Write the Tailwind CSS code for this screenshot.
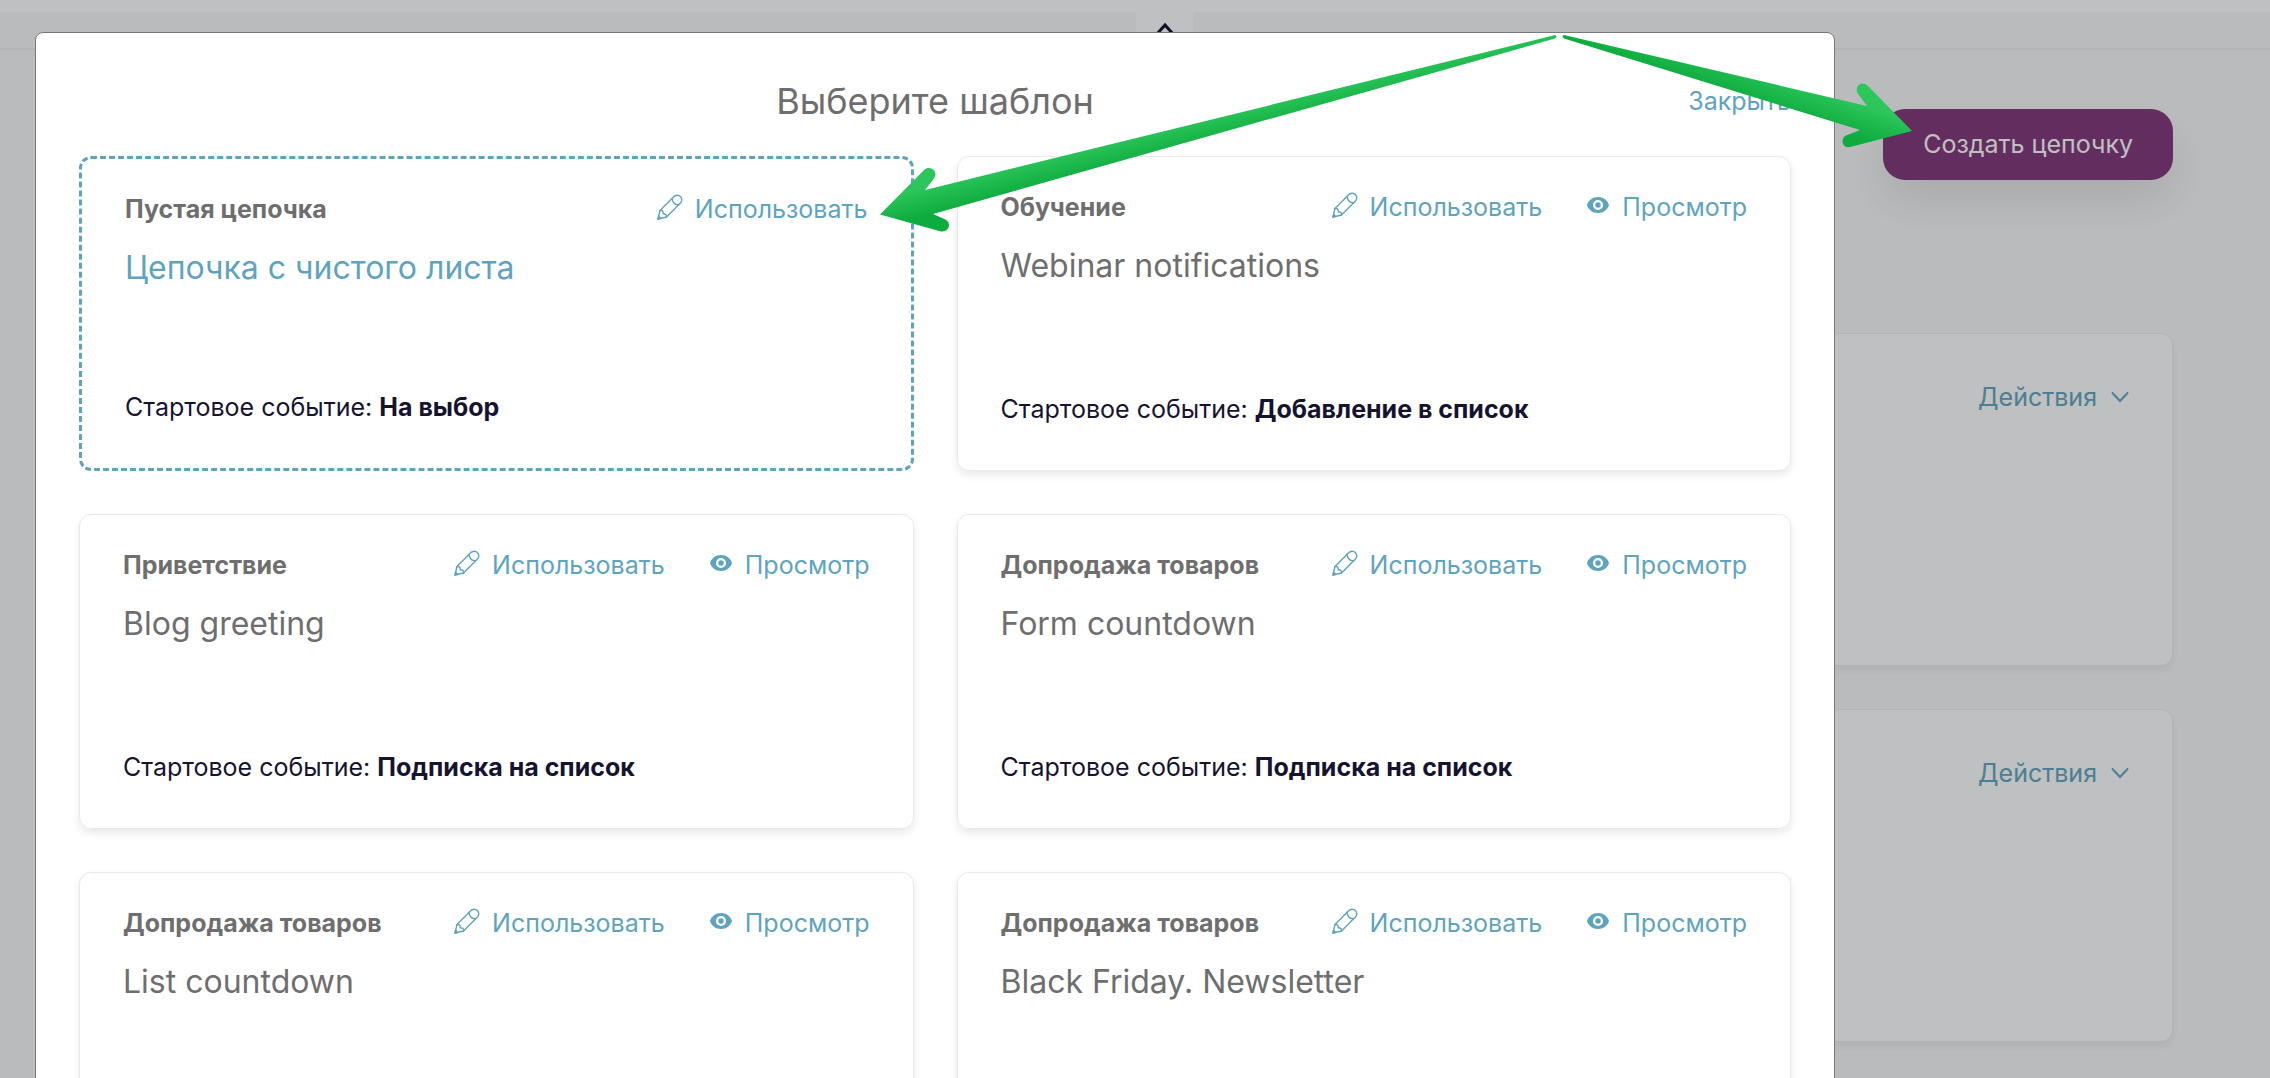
<!DOCTYPE html>
<html lang="ru">
<head>
    <meta charset="UTF-8">
    <meta name="viewport" content="width=device-width, initial-scale=1.0">
    <title>Выберите шаблон</title>
    <script src="https://cdn.jsdelivr.net/npm/@tailwindcss/browser@4"></script>
</head>
<body class="h-screen overflow-hidden bg-[#f8f9fa] font-['Inter',sans-serif] text-[25px] leading-[30px] text-[#16132f]">
    <!-- Shared icons -->
    <svg class="hidden" aria-hidden="true">
        <symbol id="icon-pencil" viewBox="0 0 26 26">
            <g fill="none" stroke="currentColor" stroke-width="1.4" stroke-linejoin="round" stroke-linecap="round">
                <path d="M1 25 3 16.500 16.700 2.800C18.500 .8 21.300 .6 23.400 2.600C25.400 4.700 25.200 7.500 23.200 9.300L9.500 23Z"/>
                <path d="M3 16.500C5.500 16.300 6.300 17.200 6.200 19.800C8.800 19.700 9.700 20.500 9.500 23M15.200 4.300C15.300 8.300 17.700 10.700 21.700 10.800"/>
                <path d="M1 25 1.600 22.300 3.700 24.400Z" fill="currentColor"/>
            </g>
        </symbol>
        <symbol id="icon-eye" viewBox="0 0 24 18">
            <path fill="currentColor" fill-rule="evenodd" d="M12 1C6.6 1 2.4 4.400 1 9c1.400 4.600 5.600 8 11 8s9.600-3.400 11-8c-1.400-4.600-5.600-8-11-8Zm0 2.900a5.100 5.100 0 1 1 0 10.200 5.100 5.100 0 0 1 0-10.200Z"/>
            <circle cx="12" cy="9" r="2.700" fill="currentColor"/>
        </symbol>
        <symbol id="icon-chevron" viewBox="0 0 18 12">
            <path fill="none" stroke="currentColor" stroke-width="2" d="m1 1.500 8 8.500 8-8.500"/>
        </symbol>
    </svg>

    <!-- Page -->
    <header>
        <div class="h-3 bg-white"></div>
        <div class="flex h-[38px] justify-center border-b-2 border-[#eceef0] pl-[59px]">
            <button type="button" aria-label="Свернуть" class="flex h-9 w-[57px] justify-center bg-white pt-[10px]">
                <svg class="h-3 w-[18px]" viewBox="0 0 18 12"><path d="M1 12 9 3l8 9" fill="none" stroke="currentColor" stroke-width="3"/></svg>
            </button>
        </div>
    </header>
    <main class="mr-[97px] ml-[97px] pt-[59px]">
        <div class="flex justify-end">
            <button type="button" class="h-[71px] rounded-[22px] bg-[#843b7e] px-10 pb-[2px] text-white shadow-[0_22px_44px_rgba(0,0,0,0.09)]">Создать цепочку</button>
        </div>
        <div class="mt-[153px] space-y-[43px]">
            <section class="flex h-[333px] justify-end rounded-xl border border-[#edeef0] bg-white px-[43px] pt-12 shadow-[0_4px_8px_rgba(0,0,0,0.06)]">
                <button type="button" class="flex items-center gap-[14px] self-start text-[#65a8c2]">Действия <svg class="h-3 w-[18px]"><use href="#icon-chevron"/></svg></button>
            </section>
            <section class="flex h-[333px] justify-end rounded-xl border border-[#edeef0] bg-white px-[43px] pt-12 shadow-[0_4px_8px_rgba(0,0,0,0.06)]">
                <button type="button" class="flex items-center gap-[14px] self-start text-[#65a8c2]">Действия <svg class="h-3 w-[18px]"><use href="#icon-chevron"/></svg></button>
            </section>
        </div>
    </main>

    <!-- Modal -->
    <div class="fixed inset-0 overflow-hidden bg-[#000308]/25 px-[35px] pt-8">
        <div role="dialog" aria-labelledby="modal-title" class="w-full max-w-[1800px] rounded-t-lg border border-[#77787b] bg-white px-[43px] pt-[45px] pb-11">
            <div class="grid grid-cols-[1fr_auto_1fr] items-center">
                <h2 id="modal-title" class="col-start-2 text-[36px] leading-[46px] text-[#6e6e6e]">Выберите шаблон</h2>
                <button type="button" class="justify-self-end text-[#5ea3bf]">Закрыть</button>
            </div>
            <div class="mt-8 grid auto-rows-[315px] grid-cols-2 gap-[43px]">
                <article class="flex flex-col rounded-xl border-3 border-dashed border-[#5ea3bf] px-[43px] pt-[35px] pb-[46px]">
                    <div class="flex items-center justify-between">
                        <span class="font-bold text-[#6e6e6e]">Пустая цепочка</span>
                        <div class="flex gap-11 text-[#5ea3bf]">
                            <a href="#" class="flex gap-3"><svg class="size-[26px]"><use href="#icon-pencil"/></svg>Использовать</a>
                        </div>
                    </div>
                    <h3 class="mt-6 text-[32px] leading-[40px] text-[#5ea3bf]">Цепочка с чистого листа</h3>
                    <p class="mt-auto">Стартовое событие: <b class="font-bold">На выбор</b></p>
                </article>
                <article class="flex flex-col rounded-xl border border-[#e9e9eb] px-[43px] pt-[35px] pb-[46px] shadow-[0_4px_8px_rgba(0,0,0,0.09)]">
                    <div class="flex items-center justify-between">
                        <span class="font-bold text-[#6e6e6e]">Обучение</span>
                        <div class="flex gap-11 text-[#5ea3bf]">
                            <a href="#" class="flex gap-3"><svg class="size-[26px]"><use href="#icon-pencil"/></svg>Использовать</a>
                            <a href="#" class="flex gap-3"><svg class="mt-1 h-[18px] w-6"><use href="#icon-eye"/></svg>Просмотр</a>
                        </div>
                    </div>
                    <h3 class="mt-6 text-[32px] leading-[40px] text-[#6e6e6e]">Webinar notifications</h3>
                    <p class="mt-auto">Стартовое событие: <b class="font-bold">Добавление в список</b></p>
                </article>
                <article class="flex flex-col rounded-xl border border-[#e9e9eb] px-[43px] pt-[35px] pb-[46px] shadow-[0_4px_8px_rgba(0,0,0,0.09)]">
                    <div class="flex items-center justify-between">
                        <span class="font-bold text-[#6e6e6e]">Приветствие</span>
                        <div class="flex gap-11 text-[#5ea3bf]">
                            <a href="#" class="flex gap-3"><svg class="size-[26px]"><use href="#icon-pencil"/></svg>Использовать</a>
                            <a href="#" class="flex gap-3"><svg class="mt-1 h-[18px] w-6"><use href="#icon-eye"/></svg>Просмотр</a>
                        </div>
                    </div>
                    <h3 class="mt-6 text-[32px] leading-[40px] text-[#6e6e6e]">Blog greeting</h3>
                    <p class="mt-auto">Стартовое событие: <b class="font-bold">Подписка на список</b></p>
                </article>
                <article class="flex flex-col rounded-xl border border-[#e9e9eb] px-[43px] pt-[35px] pb-[46px] shadow-[0_4px_8px_rgba(0,0,0,0.09)]">
                    <div class="flex items-center justify-between">
                        <span class="font-bold text-[#6e6e6e]">Допродажа товаров</span>
                        <div class="flex gap-11 text-[#5ea3bf]">
                            <a href="#" class="flex gap-3"><svg class="size-[26px]"><use href="#icon-pencil"/></svg>Использовать</a>
                            <a href="#" class="flex gap-3"><svg class="mt-1 h-[18px] w-6"><use href="#icon-eye"/></svg>Просмотр</a>
                        </div>
                    </div>
                    <h3 class="mt-6 text-[32px] leading-[40px] text-[#6e6e6e]">Form countdown</h3>
                    <p class="mt-auto">Стартовое событие: <b class="font-bold">Подписка на список</b></p>
                </article>
                <article class="flex flex-col rounded-xl border border-[#e9e9eb] px-[43px] pt-[35px] pb-[46px] shadow-[0_4px_8px_rgba(0,0,0,0.09)]">
                    <div class="flex items-center justify-between">
                        <span class="font-bold text-[#6e6e6e]">Допродажа товаров</span>
                        <div class="flex gap-11 text-[#5ea3bf]">
                            <a href="#" class="flex gap-3"><svg class="size-[26px]"><use href="#icon-pencil"/></svg>Использовать</a>
                            <a href="#" class="flex gap-3"><svg class="mt-1 h-[18px] w-6"><use href="#icon-eye"/></svg>Просмотр</a>
                        </div>
                    </div>
                    <h3 class="mt-6 text-[32px] leading-[40px] text-[#6e6e6e]">List countdown</h3>
                </article>
                <article class="flex flex-col rounded-xl border border-[#e9e9eb] px-[43px] pt-[35px] pb-[46px] shadow-[0_4px_8px_rgba(0,0,0,0.09)]">
                    <div class="flex items-center justify-between">
                        <span class="font-bold text-[#6e6e6e]">Допродажа товаров</span>
                        <div class="flex gap-11 text-[#5ea3bf]">
                            <a href="#" class="flex gap-3"><svg class="size-[26px]"><use href="#icon-pencil"/></svg>Использовать</a>
                            <a href="#" class="flex gap-3"><svg class="mt-1 h-[18px] w-6"><use href="#icon-eye"/></svg>Просмотр</a>
                        </div>
                    </div>
                    <h3 class="mt-6 text-[32px] leading-[40px] text-[#6e6e6e]">Black Friday. Newsletter</h3>
                </article>
            </div>
        </div>
    </div>

    <!-- Pointer arrows -->
    <svg class="pointer-events-none fixed top-[30px] left-[870px] h-[210px] w-[1050px]" viewBox="870 30 1050 210" aria-hidden="true">
        <defs>
            <linearGradient id="arrow-left" gradientUnits="userSpaceOnUse" x1="1000" y1="168" x2="1007" y2="196">
                <stop offset="0" stop-color="#2cc65b"/>
                <stop offset="1" stop-color="#0eab3e"/>
            </linearGradient>
            <linearGradient id="arrow-right" gradientUnits="userSpaceOnUse" x1="1833" y1="94" x2="1822" y2="126">
                <stop offset="0" stop-color="#2cc65b"/>
                <stop offset="1" stop-color="#0eab3e"/>
            </linearGradient>
        </defs>
        <path fill="url(#arrow-left)" d="M1555 35 925 190 934 178.500C939 171.500 930 164.500 924 170L880 214.500 941 231.500C949 232.500 952 223 945.500 219.500L933 214 1555 38.500Q1558 36 1555 35Z"/>
        <path fill="url(#arrow-right)" d="M1564 35 1867 106 1858.500 94.500C1853 86.500 1862 79.500 1868 86L1912 131 1850 147C1842 148.500 1840 138.500 1846 135.500L1860 130 1564 38.500Q1561 36 1564 35Z"/>
    </svg>
</body>
</html>
